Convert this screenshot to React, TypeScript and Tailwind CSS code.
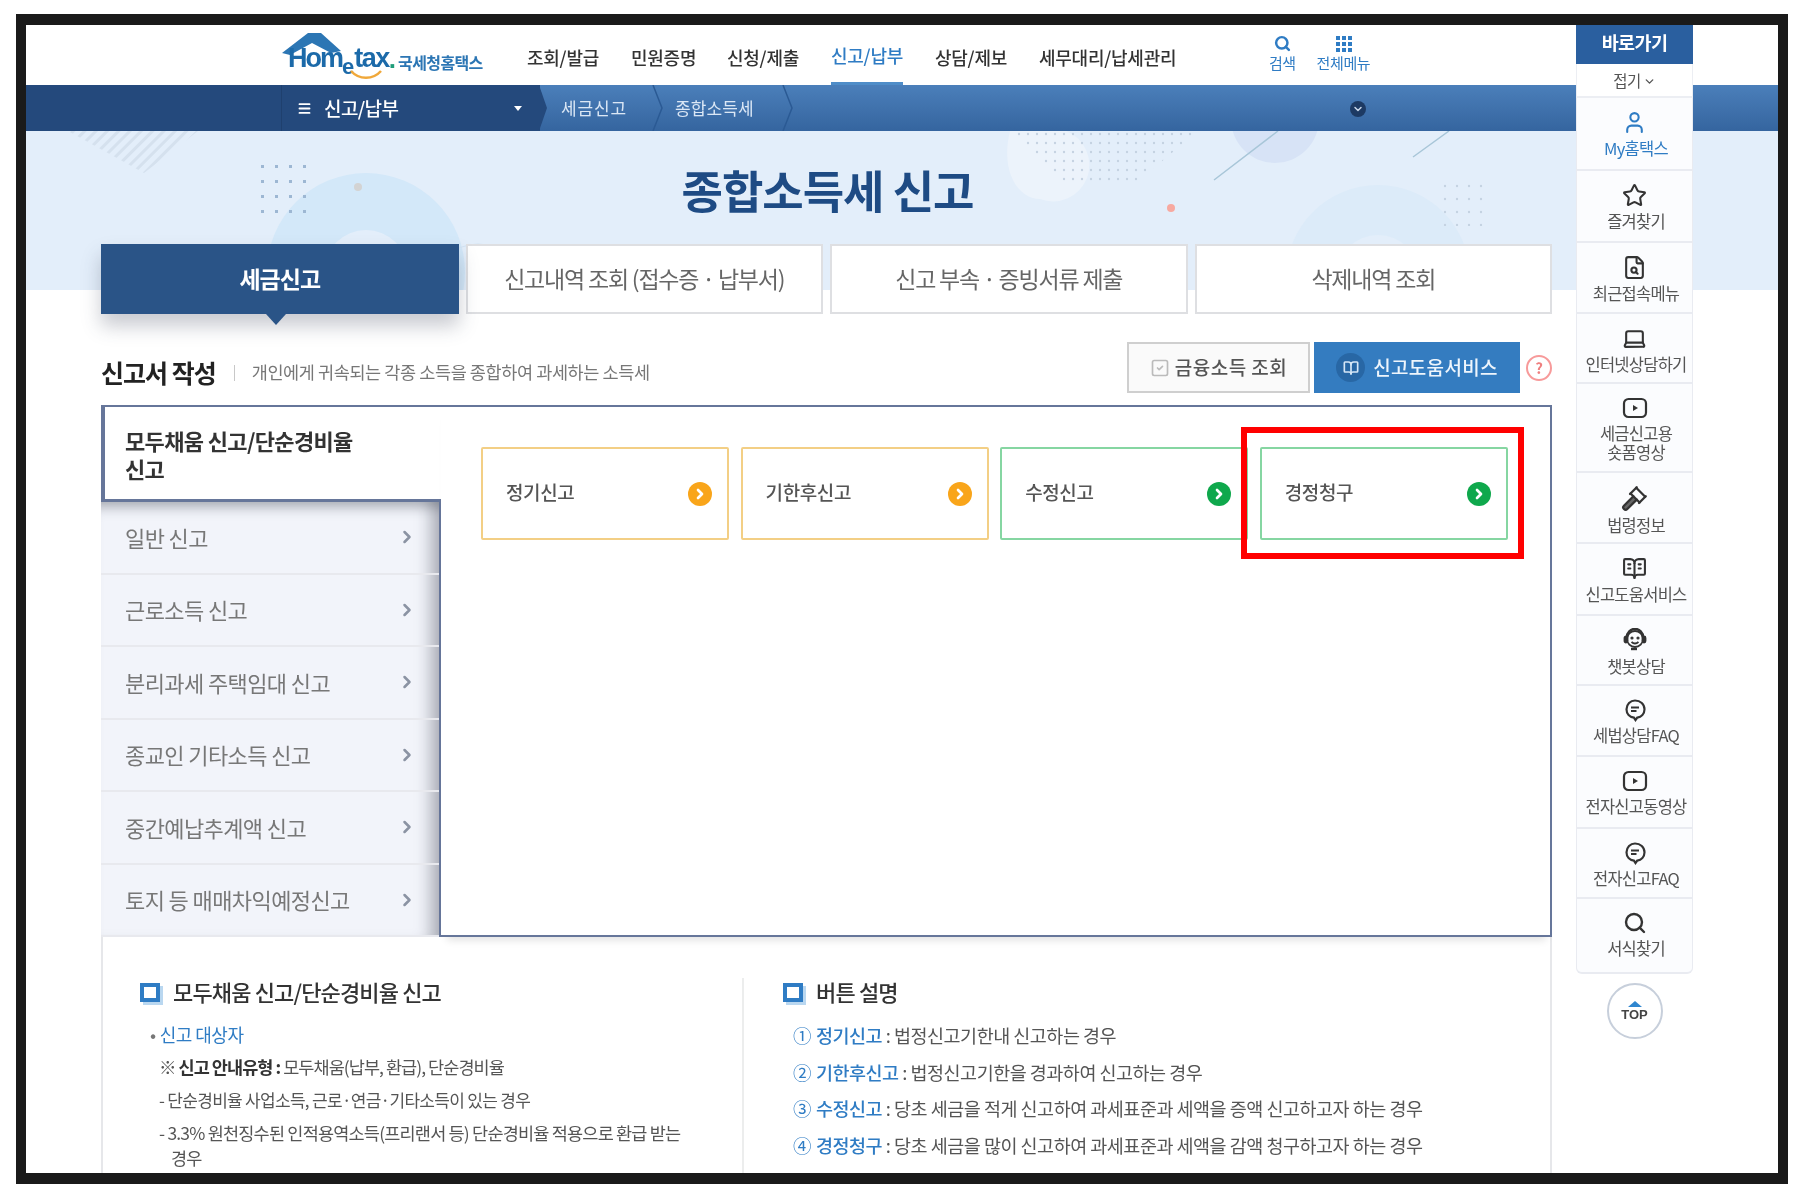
import {
  BookOpen,
  BookOpenText,
  ChevronDown,
  ChevronRight,
  FileSearch,
  Gavel,
  Laptop,
  Menu,
  Search,
  SquareCheck,
  Star,
  User,
} from "lucide-react";
import type { ReactNode } from "react";

const KR = "font-['Noto_Sans_CJK_KR','Noto_Sans',sans-serif]";

const navItems = [
  { label: "조회/발급", width: "w-[104px]" },
  { label: "민원증명", width: "w-[96px]" },
  { label: "신청/제출", width: "w-[104px]" },
  { label: "신고/납부", width: "w-[104px]", active: true },
  { label: "상담/제보", width: "w-[104px]" },
  { label: "세무대리/납세관리", width: "w-[170px]" },
];

const tabs = ["세금신고", "신고내역 조회 (접수증 · 납부서)", "신고 부속 · 증빙서류 제출", "삭제내역 조회"];

const menuItems = [
  "일반 신고",
  "근로소득 신고",
  "분리과세 주택임대 신고",
  "종교인 기타소득 신고",
  "중간예납추계액 신고",
  "토지 등 매매차익예정신고",
];

const cards = [
  { label: "정기신고", border: "border-[#f3cf85]", dot: "bg-[#f9a51a]" },
  { label: "기한후신고", border: "border-[#f3cf85]", dot: "bg-[#f9a51a]" },
  { label: "수정신고", border: "border-[#86d6a2]", dot: "bg-[#0fa84c]" },
  { label: "경정청구", border: "border-[#86d6a2]", dot: "bg-[#0fa84c]" },
];

const buttonNotes = [
  { no: "①", name: "정기신고", text: "법정신고기한내 신고하는 경우" },
  { no: "②", name: "기한후신고", text: "법정신고기한을 경과하여 신고하는 경우" },
  { no: "③", name: "수정신고", text: "당초 세금을 적게 신고하여 과세표준과 세액을 증액 신고하고자 하는 경우" },
  { no: "④", name: "경정청구", text: "당초 세금을 많이 신고하여 과세표준과 세액을 감액 청구하고자 하는 경우" },
];

function BubbleIcon() {
  return (
    <svg width="24" height="24" viewBox="0 0 24 24" fill="none" stroke="#333" strokeWidth="2.2">
      <path d="M12 2.5c5.4 0 9.5 3.6 9.5 8.8 0 4.6-3.3 7.7-7.2 8.3l-1.8 2.4-1.6-2.4c-4.2-.5-7.4-3.7-7.4-8.3 0-5.2 3.9-8.8 8.5-8.8z" />
      <path d="M8 9.5h8M8 13h5.5" />
    </svg>
  );
}

function PlayIcon() {
  return (
    <svg width="26" height="24" viewBox="0 0 26 24" fill="none">
      <rect x="2" y="3" width="22" height="18" rx="4.5" stroke="#333" strokeWidth="2.2" />
      <path d="M11 9 L16 12 L11 15 Z" fill="#333" />
    </svg>
  );
}

function BotIcon() {
  return (
    <svg width="26" height="25" viewBox="0 0 26 25" fill="none" stroke="#333" strokeWidth="1.8">
      <circle cx="13" cy="11" r="8" />
      <path d="M5 9 a8 8 0 0 1 16 0" strokeWidth="2.6" />
      <rect x="2.5" y="8.5" width="3" height="6" rx="1.5" fill="#333" />
      <rect x="20.5" y="8.5" width="3" height="6" rx="1.5" fill="#333" />
      <circle cx="10" cy="10" r="0.7" fill="#333" />
      <circle cx="16" cy="10" r="0.7" fill="#333" />
      <path d="M9.5 14 q3.5 3 7 0" />
      <path d="M9 21 h6" strokeWidth="2.4" />
    </svg>
  );
}

const quickItems: { label: ReactNode; h: string; icon: ReactNode; blue?: boolean }[] = [
  { label: "My홈택스", h: "h-[73px]", icon: <User size={25} color="#2f7cc4" />, blue: true },
  { label: "즐겨찾기", h: "h-[72px]", icon: <Star size={25} color="#333" /> },
  { label: "최근접속메뉴", h: "h-[71px]", icon: <FileSearch size={25} color="#333" /> },
  { label: "인터넷상담하기", h: "h-[70px]", icon: <Laptop size={25} color="#333" /> },
  { label: <>세금신고용<br />숏폼영상</>, h: "h-[89px]", icon: <PlayIcon /> },
  { label: "법령정보", h: "h-[71px]", icon: <Gavel size={27} color="#333" fill="#666" /> },
  { label: "신고도움서비스", h: "h-[72px]", icon: <BookOpenText size={25} color="#333" /> },
  { label: "챗봇상담", h: "h-[70px]", icon: <BotIcon /> },
  { label: "세법상담FAQ", h: "h-[71px]", icon: <BubbleIcon /> },
  { label: "전자신고동영상", h: "h-[72px]", icon: <PlayIcon /> },
  { label: "전자신고FAQ", h: "h-[70px]", icon: <BubbleIcon /> },
  { label: "서식찾기", h: "h-[73px]", icon: <Search size={24} color="#333" strokeWidth={2.4} /> },
];

function Logo() {
  return (
    <div className="relative flex h-[60px] w-[205px] items-end pb-[13px] pl-[7px]">
      <svg className="absolute left-0 top-[6px]" width="62" height="28" viewBox="0 0 62 28">
        <path d="M1 22 L27 2 L40 2 L60 20 L50 22 L31 12 L9 24 Z" fill="#2c76b4" />
      </svg>
      <span className="relative font-['Liberation_Sans',sans-serif] text-[27px] font-bold leading-none tracking-[-2px] text-[#1c6aa9]">
        Hom
      </span>
      <span className="relative top-[6px] font-['Liberation_Sans',sans-serif] text-[22px] font-bold leading-none text-[#1c6aa9]">
        e
      </span>
      <span className="relative font-['Liberation_Sans',sans-serif] text-[27px] font-bold leading-none tracking-[-1.5px] text-[#1c6aa9]">
        tax
      </span>
      <span className="relative font-['Liberation_Sans',sans-serif] text-[26px] font-bold leading-none text-[#1f9d7a]">.</span>
      <span className="relative ml-[2px] text-[16px] font-bold leading-[20px] tracking-[-0.6px] text-[#2c76b4]">국세청홈택스</span>
      <svg className="absolute left-[68px] top-[44px]" width="34" height="12" viewBox="0 0 34 12" fill="none">
        <path d="M2 2 C10 11 24 11 32 2" stroke="#f0a83a" strokeWidth="2.5" />
      </svg>
    </div>
  );
}

function HeroDeco() {
  return (
    <svg className="absolute inset-0" width="1752" height="159" viewBox="0 0 1752 159" fill="none">
      <defs>
        <pattern id="hatch" width="8" height="8" patternUnits="userSpaceOnUse" patternTransform="rotate(45)">
          <rect width="3" height="8" fill="#d5e1ee" />
        </pattern>
        <pattern id="dots" width="9" height="9" patternUnits="userSpaceOnUse">
          <circle cx="3" cy="3" r="1.2" fill="#c5d2e2" />
        </pattern>
        <pattern id="dots2" width="12" height="13" patternUnits="userSpaceOnUse">
          <circle cx="3" cy="3" r="1.2" fill="#c5d2e2" />
        </pattern>
      </defs>
      <path d="M42 0 H172 L118 42 Z" fill="url(#hatch)" />
      <path fillRule="evenodd" d="M241 141 a99 99 0 1 1 198 0 a99 99 0 1 1 -198 0 Z M298 141 a42 42 0 1 0 84 0 a42 42 0 1 0 -84 0 Z" fill="#d3e8f9" />
      <path d="M406 159 A46 46 0 0 1 498 159" stroke="#d3e3f3" />
      <circle cx="332" cy="56" r="4" fill="#d3d3d3" />
      {[0, 1, 2, 3].map((r) =>
        [0, 1, 2, 3].map((c) => <rect key={`${r}-${c}`} x={235 + c * 14} y={34 + r * 15} width="3" height="3" fill="#9db7d3" />),
      )}
      <path d="M984 0 H1040 A34 34 0 0 1 1014 68 C992 68 974 40 984 0 Z" fill="#ecf3fb" />
      <path d="M986 0 H1172 L1110 52 H1040 Z" fill="url(#dots)" />
      <circle cx="1249" cy="-12" r="44" fill="#d7e3f6" />
      <path d="M1188 49 L1252 0 M1387 26 L1423 0" stroke="#a8c6d8" strokeWidth="1.5" />
      <circle cx="1145" cy="77" r="4" fill="#f7a9a0" />
      <path fillRule="evenodd" d="M1260 146 a92 92 0 1 1 184 0 a92 92 0 1 1 -184 0 Z M1310 146 a42 42 0 1 0 84 0 a42 42 0 1 0 -84 0 Z" fill="#dcebf9" />
      <path d="M1410 52 H1462 V95 H1410 Z" fill="url(#dots2)" />
    </svg>
  );
}

function SectionTitle({ children }: { children: ReactNode }) {
  return (
    <div className="flex h-[28px] items-center gap-[13px]">
      <span className="h-[19px] w-[20px] shrink-0 border-[4px] border-[#2f7cc4] shadow-[3px_3px_0_#b9d7f0]" />
      <span className="pb-[2px] text-[22px] font-medium leading-none tracking-[-0.85px] text-[#333]">{children}</span>
    </div>
  );
}

export default function App() {
  return (
    <div className={`h-[1192px] w-[1796px] overflow-hidden bg-white pl-[16px] pt-[14px] blur-[0.7px] ${KR}`}>
      {/* black frame of the capture */}
      <div className="h-[1170px] w-[1772px] border-x-[10px] border-y-[11px] border-[#1a1a1a]">
        <div className="relative h-[1148px] w-[1752px] overflow-hidden bg-white">
          {/* header */}
          <div className="flex h-[60px] items-center pl-[255px]">
            <Logo />
            <nav className="ml-[41px] flex h-full items-center">
              {navItems.map((n) => (
                <div
                  key={n.label}
                  className={`flex h-full items-center ${n.width} ${n.active ? "text-[#2f7cc4]" : "text-[#333]"}`}
                >
                  <span
                    className={`flex h-full items-center pt-[4px] text-[18px] font-medium tracking-[-0.25px] ${n.active ? "border-b-[3px] border-[#4f8dc8]" : ""}`}
                  >
                    {n.label}
                  </span>
                </div>
              ))}
            </nav>
            <div className="ml-[60px] flex -translate-y-[2px] flex-col items-center text-[#2f7cc4]">
              <Search size={17} strokeWidth={3.5} />
              <span className="mt-[2px] text-[15px] leading-[18px] tracking-[-0.5px]">검색</span>
            </div>
            <div className="ml-[21px] flex -translate-y-[2px] flex-col items-center text-[#2f7cc4]">
              <svg width="17" height="17" viewBox="0 0 17 17" fill="#2f7cc4">
                {[1, 7, 13].map((y) => [1, 7, 13].map((x) => <rect key={`${x}-${y}`} x={x} y={y} width="4" height="4" />))}
              </svg>
              <span className="mt-[2px] text-[15px] leading-[18px] tracking-[-0.4px]">전체메뉴</span>
            </div>
          </div>

          {/* location bar */}
          <div className="flex h-[46px] items-stretch bg-gradient-to-b from-[#4b7fba] to-[#35659f]">
            <div className="flex w-[255px] bg-[#24497c]" />
            <div className="flex w-[259px] items-center border-l border-[#1f406e] bg-[#24497c] pl-[15px] text-white">
              <Menu size={15} strokeWidth={3} />
              <span className="ml-[12px] text-[19px] font-medium tracking-[-0.6px]">신고/납부</span>
              <span className="ml-auto mr-[18px] h-0 w-0 border-x-[4px] border-t-[5px] border-x-transparent border-t-white" />
            </div>
            <svg width="10" height="46" viewBox="0 0 10 46" className="-ml-px">
              <path d="M0 0 L8 23 L0 46 Z" fill="#24497c" />
            </svg>
            <span className="ml-[12px] flex w-[91px] items-center text-[17px] tracking-[0.9px] text-[#dbe7f5]">세금신고</span>
            <svg width="12" height="46" viewBox="0 0 12 46" fill="none">
              <path d="M1 0 L10 23 L1 46" stroke="#2b5a94" strokeWidth="1.5" />
            </svg>
            <span className="ml-[11px] flex w-[107px] items-center text-[17px] tracking-[0.1px] text-[#dbe7f5]">종합소득세</span>
            <svg width="12" height="46" viewBox="0 0 12 46" fill="none">
              <path d="M1 0 L10 23 L1 46" stroke="#2b5a94" strokeWidth="1.5" />
            </svg>
            <div className="ml-[556px] flex items-center pt-[2px]">
              <span className="flex h-[16px] w-[16px] items-center justify-center rounded-full bg-[#1d3a63] text-[#c8d6e8]">
                <ChevronDown size={12} strokeWidth={3} />
              </span>
            </div>
          </div>

          {/* hero */}
          <div className="relative h-[159px] bg-[#e3eefa]">
            <HeroDeco />
            <h1 className="relative w-[1603px] pt-[29px] text-center text-[45px] font-bold leading-[60px] tracking-[-1px] text-[#1e4b84]">
              종합소득세 신고
            </h1>
          </div>

          <div className="relative -mt-[46px] w-[1526px] pl-[75px]">
            {/* tabs */}
            <div className="flex h-[70px] gap-[7px]">
              {tabs.map((t, i) =>
                i === 0 ? (
                  <div
                    key={t}
                    className="relative flex w-[358px] items-center justify-center bg-[#2a5487] pb-[2px] text-[23px] font-bold tracking-[-1px] text-white shadow-[0_12px_18px_rgba(60,70,90,0.28)]"
                  >
                    {t}
                    <span className="absolute left-[165px] top-[70px] h-0 w-0 border-x-[10px] border-t-[11px] border-x-transparent border-t-[#2a5487]" />
                  </div>
                ) : (
                  <div
                    key={t}
                    className="flex w-[358px] items-center justify-center border-2 border-[#dedfe2] bg-white pb-[2px] text-[23px] tracking-[-1.2px] text-[#666]"
                  >
                    {t}
                  </div>
                ),
              )}
            </div>

            {/* section head */}
            <div className="mt-[28px] flex h-[51px] items-center">
              <h2 className="pt-[11px] text-[25px] font-bold tracking-[-1px] text-[#222]">신고서 작성</h2>
              <span className="ml-[18px] mt-[10px] h-[16px] w-px bg-[#c8c8c8]" />
              <p className="ml-[17px] pt-[9px] text-[17.5px] tracking-[-0.4px] text-[#777]">개인에게 귀속되는 각종 소득을 종합하여 과세하는 소득세</p>
              <div className="ml-auto flex h-full items-stretch">
                <button className="flex w-[183px] items-center justify-center gap-[5px] border-2 border-[#cfcfcf] bg-[#fafafa] text-[19px] font-medium tracking-[0.45px] text-[#555]">
                  <SquareCheck size={20} color="#bbb" />
                  금융소득 조회
                </button>
                <button className="ml-[4px] flex w-[206px] items-center justify-center gap-[8px] bg-[#347cc0] text-[19px] font-medium tracking-[0.3px] text-[#eef5fc]">
                  <span className="flex h-[29px] w-[29px] items-center justify-center rounded-full bg-[#2867a5]">
                    <BookOpen size={16} color="#d5e6f6" strokeWidth={2.5} />
                  </span>
                  신고도움서비스
                </button>
                <span className="ml-[6px] flex h-[26px] w-[26px] self-center rounded-full border-2 border-[#f79a9a] text-[15px] font-bold leading-[22px] text-[#ef7f7f]">
                  <span className="w-full text-center">?</span>
                </span>
              </div>
            </div>

            {/* form type panel */}
            <div className="mt-[12px] flex h-[532px] w-[1451px]">
              <div className="flex w-[340px] flex-col">
                <div className="h-[97px] border-b-[3px] border-l-[4px] border-t-2 border-[#66769a] bg-white pl-[20px] pt-[19px] text-[22px] font-semibold leading-[28px] tracking-[-0.65px] text-[#333]">
                  모두채움 신고/단순경비율
                  <br />
                  신고
                </div>
                <ul className="flex-1 border-r-2 border-[#66769a] bg-[#f2f4fa] shadow-[inset_-18px_0_16px_-10px_rgba(60,65,80,0.4),inset_0_16px_12px_-10px_rgba(60,65,80,0.35)]">
                  {menuItems.map((m) => (
                    <li
                      key={m}
                      className="flex h-[72.5px] items-center border-b-2 border-[#e8e9ee] pl-[24px] pr-[22px] text-[22px] tracking-[-0.6px] text-[#777]"
                    >
                      <span>{m}</span>
                      <ChevronRight className="ml-auto" size={20} color="#8b93a3" strokeWidth={3} />
                    </li>
                  ))}
                </ul>
              </div>
              <div className="flex-1 border-y-2 border-r-2 border-[#66769a] bg-white pl-[40px] pt-[40px] shadow-[0_9px_8px_-6px_rgba(0,0,0,0.12)]">
                <div className="flex gap-[11.6px]">
                  {cards.map((c) => (
                    <div
                      key={c.label}
                      className={`flex h-[93px] w-[248px] items-center justify-between rounded-[2px] border-2 bg-white pl-[23px] pr-[15px] ${c.border}`}
                    >
                      <span className="pb-[2px] text-[19px] font-medium tracking-[-0.4px] text-[#555]">{c.label}</span>
                      <span className={`flex h-[24px] w-[24px] items-center justify-center rounded-full text-white ${c.dot}`}>
                        <ChevronRight size={16} strokeWidth={4} />
                      </span>
                    </div>
                  ))}
                </div>
              </div>
            </div>

            {/* description */}
            <div className="flex h-[240px] w-[1451px] border-x-2 border-[#e6e7ea] pt-[41px]">
              <div className="w-[641px] border-r-2 border-[#eceded] pl-[37px]">
                <SectionTitle>모두채움 신고/단순경비율 신고</SectionTitle>
                <p className="ml-[10px] mt-[16px] text-[18px] leading-[24px] tracking-[-0.5px] text-[#2f7cc4]">
                  <span className="mr-[4px] text-[#777]">•</span>신고 대상자
                </p>
                <p className="ml-[19px] mt-[9px] text-[17.5px] leading-[24px] tracking-[-0.95px] text-[#555]">
                  ※ <b className="font-bold text-[#333]">신고 안내유형 :</b> 모두채움(납부, 환급), 단순경비율
                </p>
                <p className="ml-[19px] mt-[9px] text-[17px] leading-[24px] tracking-[-0.7px] text-[#555]">- 단순경비율 사업소득, 근로·연금·기타소득이 있는 경우</p>
                <p className="ml-[19px] mt-[8px] pl-[12px] -indent-[12px] text-[17.5px] leading-[25px] tracking-[-0.8px] text-[#555]">
                  - 3.3% 원천징수된 인적용역소득(프리랜서 등) 단순경비율 적용으로 환급 받는
                  <br />
                  경우
                </p>
              </div>
              <div className="pl-[39px]">
                <SectionTitle>버튼 설명</SectionTitle>
                <ul className="ml-[10px] mt-[17px] flex flex-col gap-[12.5px]">
                  {buttonNotes.map((n) => (
                    <li key={n.no} className="flex text-[18.5px] leading-[24px] tracking-[-0.5px] text-[#555]">
                      <span className="w-[23px] text-[#2f7cc4]">{n.no}</span>
                      <span>
                        <b className="font-medium text-[#2f7cc4]">{n.name}</b> : {n.text}
                      </span>
                    </li>
                  ))}
                </ul>
              </div>
            </div>
          </div>

          {/* red highlight drawn over the screen */}
          <div className="absolute left-[1215px] top-[402px] h-[132px] w-[283px] border-[6px] border-[#ff0000]" />

          {/* quick menu */}
          <aside className="absolute left-[1550px] top-0 w-[117px]">
            <div className="flex h-[39px] items-center justify-center bg-[#2a5f9f] pb-[3px] text-[18.5px] font-bold tracking-[-0.6px] text-white">바로가기</div>
            <div className="flex h-[34px] items-center justify-center gap-[2px] border-x border-b-2 border-[#eceef3] bg-white pt-[2px] text-[15.5px] tracking-[-0.6px] text-[#555]">
              접기
              <ChevronDown size={13} strokeWidth={2.5} />
            </div>
            <div className="rounded-b-[6px] border-x border-b-2 border-[#e9ebf1] bg-[#fbfcfe]">
              {quickItems.map((q, i) => (
                <div key={i} className={`flex flex-col items-center border-b-2 border-[#e9ebf1] pt-[12px] last:border-b-0 ${q.h}`}>
                  {q.icon}
                  <span
                    className={`mt-[4px] whitespace-nowrap pl-[3px] text-center text-[16.5px] leading-[19px] tracking-[-0.75px] ${q.blue ? "text-[#2f7cc4]" : "text-[#555]"}`}
                  >
                    {q.label}
                  </span>
                </div>
              ))}
            </div>
            <div className="mx-auto mt-[9px] flex h-[56px] w-[56px] flex-col items-center justify-center rounded-full border-2 border-[#c7cfdb] bg-white">
              <span className="h-0 w-0 border-x-[7px] border-b-[6px] border-x-transparent border-b-[#2f86cf]" />
              <span className="font-['Liberation_Sans',sans-serif] text-[13px] font-bold leading-[15px] text-[#444]">TOP</span>
            </div>
          </aside>
        </div>
      </div>
    </div>
  );
}
